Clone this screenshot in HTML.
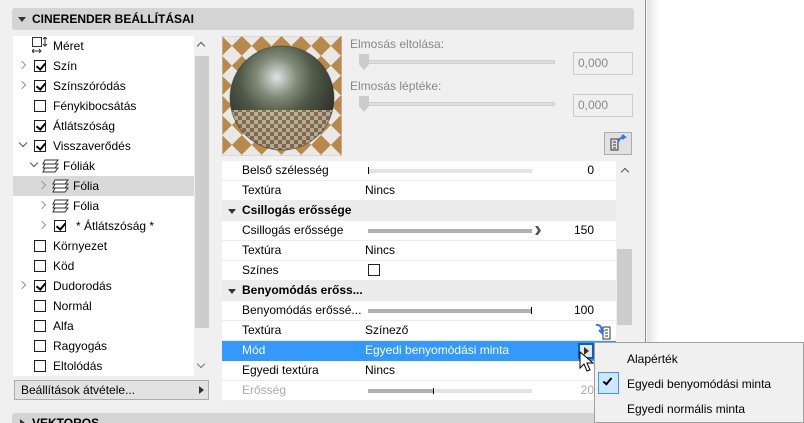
<!DOCTYPE html>
<html style="width:804px;height:423px;overflow:hidden"><head><meta charset="utf-8"><style>
*{box-sizing:border-box;margin:0;padding:0}
body{width:804px;height:423px;overflow:hidden;background:#fff;font-family:"Liberation Sans",sans-serif;font-size:12px;color:#000;position:relative}
.panel{position:absolute;left:0;top:0;width:646px;height:423px;background:#f0f0f0;border-right:1px solid #7d90a8;overflow:hidden}
.shadow{position:absolute;left:647px;top:0;width:12px;height:423px;background:linear-gradient(90deg,#e2e2e2,#fff)}
.hdr{position:absolute;left:12px;top:8px;width:622px;height:22px;background:#d4d4d4;border-radius:3px;font-weight:bold;font-size:12px;line-height:22px;padding-left:20px}
.tri{position:absolute;left:6px;top:9px;width:0;height:0;border-left:4px solid transparent;border-right:4px solid transparent;border-top:5px solid #333}
.abs{position:absolute}
.tree{position:absolute;left:13px;top:36px;width:181px;height:340px;background:#fff}
.row{position:absolute;left:0;width:181px;height:20px;line-height:20px}
.cb{position:absolute;width:12px;height:12px;border:1px solid #222;top:4px;background:#fff}
.cb.k::after{content:"";position:absolute;left:3px;top:0px;width:4px;height:7px;border-right:2px solid #000;border-bottom:2px solid #000;transform:rotate(40deg)}
.chev{position:absolute;top:6px;width:6px;height:6px;border-right:1.5px solid #999;border-top:1.5px solid #999;transform:rotate(45deg)}
.chevd{position:absolute;top:4px;width:6px;height:6px;border-right:1.5px solid #555;border-bottom:1.5px solid #555;transform:rotate(45deg)}
.prow{position:absolute;left:222px;width:394px;height:20px;line-height:19px;background:#fff;border-bottom:1px solid #ececec}
.prow .n{position:absolute;left:20px}
.prow .v{position:absolute;left:143px}
.sec{background:#ececec;font-weight:bold}
.bar{position:absolute;left:146px;top:8px;width:164px;height:4px;background:#e3e3e3}
.num{position:absolute;right:22px}
</style></head><body>
<div class="panel">
 <div class="hdr"><span class="tri"></span>CINERENDER BEÁLLÍTÁSAI</div>
 <div class="tree">
  <div class="row" style="top:0"><svg class="abs" style="left:19px;top:1px" width="16" height="16"><rect x="0.5" y="0.5" width="9" height="9" fill="none" stroke="#333"/><path d="M13 0v9M11 2l2-2 2 2M11 7l2 2 2-2M0 14h9M2 12l-2 2 2 2M7 12l2 2-2 2" stroke="#333" fill="none"/></svg><span class="abs" style="left:40px">Méret</span></div>
  <div class="row" style="top:20px"><span class="chev" style="left:6px"></span><span class="cb k" style="left:21px"></span><span class="abs" style="left:40px">Szín</span></div>
  <div class="row" style="top:40px"><span class="chev" style="left:6px"></span><span class="cb k" style="left:21px"></span><span class="abs" style="left:40px">Színszóródás</span></div>
  <div class="row" style="top:60px"><span class="cb" style="left:21px"></span><span class="abs" style="left:40px">Fénykibocsátás</span></div>
  <div class="row" style="top:80px"><span class="cb k" style="left:21px"></span><span class="abs" style="left:40px">Átlátszóság</span></div>
  <div class="row" style="top:100px"><span class="chevd" style="left:7px"></span><span class="cb k" style="left:21px"></span><span class="abs" style="left:40px">Visszaverődés</span></div>
  <div class="row" style="top:120px"><span class="chevd" style="left:18px"></span><svg class="abs" style="left:29px;top:3px" width="17" height="14"><path d="M3 1h13l-3 4H1zM3 5h13l-3 4H1zM3 9h13l-3 4H1z" fill="#fff" stroke="#333"/></svg><span class="abs" style="left:50px">Fóliák</span></div>
  <div class="row" style="top:140px;background:#d9d9d9"><span class="chev" style="left:26px"></span><svg class="abs" style="left:39px;top:3px" width="17" height="14"><path d="M3 1h13l-3 4H1zM3 5h13l-3 4H1zM3 9h13l-3 4H1z" fill="#fff" stroke="#333"/></svg><span class="abs" style="left:60px">Fólia</span></div>
  <div class="row" style="top:160px"><span class="chev" style="left:26px"></span><svg class="abs" style="left:39px;top:3px" width="17" height="14"><path d="M3 1h13l-3 4H1zM3 5h13l-3 4H1zM3 9h13l-3 4H1z" fill="#fff" stroke="#333"/></svg><span class="abs" style="left:60px">Fólia</span></div>
  <div class="row" style="top:180px"><span class="chev" style="left:26px"></span><span class="cb k" style="left:41px"></span><span class="abs" style="left:63px">* Átlátszóság *</span></div>
  <div class="row" style="top:200px"><span class="cb" style="left:21px"></span><span class="abs" style="left:40px">Környezet</span></div>
  <div class="row" style="top:220px"><span class="cb" style="left:21px"></span><span class="abs" style="left:40px">Köd</span></div>
  <div class="row" style="top:240px"><span class="chev" style="left:6px"></span><span class="cb k" style="left:21px"></span><span class="abs" style="left:40px">Dudorodás</span></div>
  <div class="row" style="top:260px"><span class="cb" style="left:21px"></span><span class="abs" style="left:40px">Normál</span></div>
  <div class="row" style="top:280px"><span class="cb" style="left:21px"></span><span class="abs" style="left:40px">Alfa</span></div>
  <div class="row" style="top:300px"><span class="cb" style="left:21px"></span><span class="abs" style="left:40px">Ragyogás</span></div>
  <div class="row" style="top:320px"><span class="cb" style="left:21px"></span><span class="abs" style="left:40px">Eltolódás</span></div>
 </div>
 <div class="abs" style="left:194px;top:36px;width:15px;height:340px;background:#f0f0f0"></div>
 <div class="abs" style="left:195px;top:56px;width:14px;height:272px;background:#cdcdcd"></div>
 <div class="abs" style="left:198px;top:43px;width:6px;height:6px;border-left:1.5px solid #555;border-top:1.5px solid #555;transform:rotate(45deg)"></div>
 <div class="abs" style="left:198px;top:361px;width:6px;height:6px;border-right:1.5px solid #777;border-bottom:1.5px solid #777;transform:rotate(45deg)"></div>
 <div class="abs" style="left:14px;top:380px;width:195px;height:20px;background:#e2e2e2;border:1px solid #adadad;line-height:18px;padding-left:6px">Beállítások átvétele...<span class="abs" style="right:4px;top:5px;border-top:4px solid transparent;border-bottom:4px solid transparent;border-left:5px solid #333"></span></div>

 <svg class="abs" style="left:222px;top:36px" width="120" height="120">
  <defs><pattern id="ck" width="28" height="28" patternUnits="userSpaceOnUse" patternTransform="rotate(45)"><rect width="28" height="28" fill="#e8e8e6"/><rect width="14" height="14" fill="#b8894a"/><rect x="14" y="14" width="14" height="14" fill="#b8894a"/></pattern>
  <pattern id="ck2" width="8" height="8" patternUnits="userSpaceOnUse"><rect width="8" height="8" fill="#d8d2c8"/><rect width="4" height="4" fill="#a07a45"/><rect x="4" y="4" width="4" height="4" fill="#a07a45"/></pattern>
  <radialGradient id="sg" cx="45%" cy="30%" r="65%"><stop offset="0" stop-color="#dfe3e2"/><stop offset=".3" stop-color="#7f8a78"/><stop offset=".55" stop-color="#4e5a46"/><stop offset="1" stop-color="#2b2b28"/></radialGradient>
  <clipPath id="cp"><circle cx="60" cy="62" r="52"/></clipPath></defs>
  <rect width="120" height="120" fill="url(#ck)"/>
  <rect width="120" height="120" fill="none" stroke="#ccc"/>
  <circle cx="60" cy="62" r="52" fill="url(#sg)"/>
  <g clip-path="url(#cp)"><rect x="0" y="74" width="120" height="46" fill="url(#ck2)" opacity=".75"/></g>
  <circle cx="60" cy="62" r="52" fill="none" stroke="#333" stroke-opacity=".5"/>
 </svg>
 <div class="abs" style="left:350px;top:37px;color:#888">Elmosás eltolása:</div>
 <div class="abs" style="left:362px;top:60px;width:193px;height:4px;background:#ddd;border:1px solid #d0d0d0"></div>
 <div class="abs" style="left:359px;top:54px;width:10px;height:16px;background:#ccc;clip-path:polygon(0 0,100% 0,100% 65%,50% 100%,0 65%)"></div>
 <div class="abs" style="left:573px;top:52px;width:60px;height:23px;border:1px solid #ccc;line-height:21px;padding-left:4px;color:#888">0,000</div>
 <div class="abs" style="left:350px;top:79px;color:#888">Elmosás léptéke:</div>
 <div class="abs" style="left:362px;top:102px;width:193px;height:4px;background:#ddd;border:1px solid #d0d0d0"></div>
 <div class="abs" style="left:359px;top:96px;width:10px;height:16px;background:#ccc;clip-path:polygon(0 0,100% 0,100% 65%,50% 100%,0 65%)"></div>
 <div class="abs" style="left:573px;top:94px;width:60px;height:23px;border:1px solid #ccc;line-height:21px;padding-left:4px;color:#888">0,000</div>
 <div class="abs" style="left:604px;top:132px;width:28px;height:23px;background:#e1e1e1;border:1px solid #adadad"><svg width="26" height="21"><path d="M6 6h7v11H6zM8 9h3M8 12h3M8 15h3" fill="none" stroke="#333"/><path d="M13 9q2-5 6-5M17 2l3 2-3 2" fill="none" stroke="#2d7be0" stroke-width="2"/></svg></div>

 <div class="prow" style="top:161px"><span class="n">Belső szélesség</span><span class="bar"><span class="abs" style="left:0;top:-2px;width:1px;height:7px;background:#000"></span></span><span class="num">0</span></div>
 <div class="prow" style="top:181px"><span class="n">Textúra</span><span class="v">Nincs</span></div>
 <div class="prow sec" style="top:201px"><span class="abs" style="left:6px;top:8px;border-left:4px solid transparent;border-right:4px solid transparent;border-top:5px solid #333"></span><span class="n">Csillogás erőssége</span></div>
 <div class="prow" style="top:221px"><span class="n">Csillogás erőssége</span><span class="bar" style="background:#b0b0b0"></span><span class="abs" style="left:313px;top:5px;width:6px;height:9px;background:#555;clip-path:polygon(0 0,50% 0,100% 50%,50% 100%,0 100%,50% 50%)"></span><span class="num">150</span></div>
 <div class="prow" style="top:241px"><span class="n">Textúra</span><span class="v">Nincs</span></div>
 <div class="prow" style="top:261px"><span class="n">Színes</span><span class="cb" style="left:146px;top:3px"></span></div>
 <div class="prow sec" style="top:281px"><span class="abs" style="left:6px;top:8px;border-left:4px solid transparent;border-right:4px solid transparent;border-top:5px solid #333"></span><span class="n">Benyomódás erőss...</span></div>
 <div class="prow" style="top:301px"><span class="n">Benyomódás erőssé...</span><span class="bar" style="background:#b0b0b0"><span class="abs" style="right:0;top:-2px;width:1px;height:7px;background:#000"></span></span><span class="num">100</span></div>
 <div class="prow" style="top:321px"><span class="n">Textúra</span><span class="v">Színező</span><svg class="abs" style="left:372px;top:1px" width="20" height="18"><path d="M9 5h7v12H9zM11 8h3M11 11h3M11 14h3" fill="none" stroke="#333"/><path d="M2 3q5-1 6 6M5 8l3 3 2-3" fill="none" stroke="#2d7be0" stroke-width="2"/></svg></div>
 <div class="prow" style="top:341px;background:#3399ff;color:#fff;border-bottom-color:#3399ff"><span class="n">Mód</span><span class="v">Egyedi benyomódási minta</span><span class="abs" style="left:356px;top:2px;width:16px;height:16px;border:2px solid #1060b0;background:#e6e6e6"><span class="abs" style="left:4px;top:2px;border-top:4px solid transparent;border-bottom:4px solid transparent;border-left:5px solid #333"></span></span></div>
 <div class="prow" style="top:361px"><span class="n">Egyedi textúra</span><span class="v">Nincs</span></div>
 <div class="prow" style="top:381px;color:#aaa"><span class="n">Erősség</span><span class="bar" style="background:#e3e3e3"><span class="abs" style="left:0;top:0;width:66px;height:4px;background:#b0b0b0"></span><span class="abs" style="left:65px;top:-1px;width:1px;height:6px;background:#000"></span></span><span class="num">20</span></div>
 <div class="abs" style="left:617px;top:161px;width:15px;height:240px;background:#f0f0f0"></div>
 <div class="abs" style="left:617px;top:249px;width:15px;height:76px;background:#cdcdcd"></div>
 <div class="abs" style="left:622px;top:169px;width:6px;height:6px;border-left:1.5px solid #555;border-top:1.5px solid #555;transform:rotate(45deg)"></div>
 <div class="hdr" style="top:413px;height:10px;line-height:20px;overflow:hidden;border-radius:3px 3px 0 0"><span class="abs" style="left:8px;top:6px;border-top:4px solid transparent;border-bottom:4px solid transparent;border-left:5px solid #333"></span>VEKTOROS</div>
</div>
<div class="shadow"></div>
<svg class="abs" style="left:578px;top:350px" width="18" height="24"><path d="M2 2v16l4-4 3 7 3-1-3-7h6z" fill="#fff" stroke="#000"/></svg>
<div class="abs" style="left:594px;top:342px;width:210px;height:81px;background:#f0f0f0;border:1px solid #a0a0a0">
 <div class="abs" style="left:32px;top:9px">Alapérték</div>
 <div class="abs" style="left:3px;top:29px;width:21px;height:22px;background:#cce8ff;border:1px solid #3399ff"><span class="abs" style="left:6px;top:3px;width:5px;height:9px;border-right:2px solid #000;border-bottom:2px solid #000;transform:rotate(40deg)"></span></div>
 <div class="abs" style="left:32px;top:34px">Egyedi benyomódási minta</div>
 <div class="abs" style="left:32px;top:59px">Egyedi normális minta</div>
</div>
</body></html>
